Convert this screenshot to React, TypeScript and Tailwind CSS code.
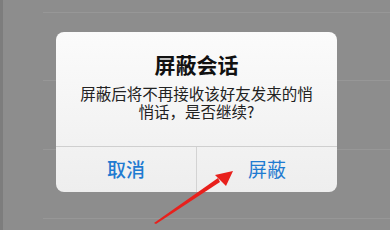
const cjk = { fontFamily: '"Noto Sans CJK SC", "Liberation Sans", sans-serif' }

function Arrow() {
  return (
    <svg className="absolute left-0 top-0" width="390" height="230" viewBox="0 0 390 230">
      <polygon points="154,223 156,224 220,182 218,178" fill="#e8201c" />
      <polygon points="233,171 215,175 226,186" fill="#e8201c" />
    </svg>
  )
}

export default function App() {
  return (
    <div className="relative w-[390px] h-[230px] overflow-hidden bg-[#8d8d8d]" style={cjk}>
      {/* faint rows of the list behind the overlay */}
      <div className="absolute left-0 top-0 h-full w-[3px] bg-[#7d7d7d]" />
      <div className="absolute left-[43px] right-0 top-[12px] border-t border-[#979797]" />
      <div className="absolute left-[43px] right-0 top-[80px] border-t border-[#979797]" />
      <div className="absolute left-[43px] right-0 top-[149px] border-t border-[#979797]" />
      <div className="absolute left-[43px] right-0 top-[218px] border-t border-[#979797]" />

      <div className="absolute left-[56px] top-[32px] w-[281px] h-[160px] rounded-[8px] bg-gradient-to-b from-[#fbfbfb] to-[#eeeeee] flex flex-col overflow-hidden">
        <div className="h-[114px] flex flex-col items-center pt-[18px]">
          <div className="text-[21px] leading-[28px] font-bold text-[#111]">屏蔽会话</div>
          <div className="mt-[6px] flex flex-col items-center text-[15.5px] text-[#222]">
            <div className="h-[18px] leading-[18px]">屏蔽后将不再接收该好友发来的悄</div>
            <div className="h-[18px] leading-[18px]">悄话，是否继续?</div>
          </div>
        </div>
        <div className="flex flex-1 border-t border-[#cfcfcf]">
          <div className="flex-1 flex items-center justify-center text-[19px] font-medium text-[#1f7bd1] border-r border-[#d3d3d3]">
            取消
          </div>
          <div className="flex-1 flex items-center justify-center text-[19px] text-[#1f7bd1]">
            屏蔽
          </div>
        </div>
      </div>

      <Arrow />
    </div>
  )
}
